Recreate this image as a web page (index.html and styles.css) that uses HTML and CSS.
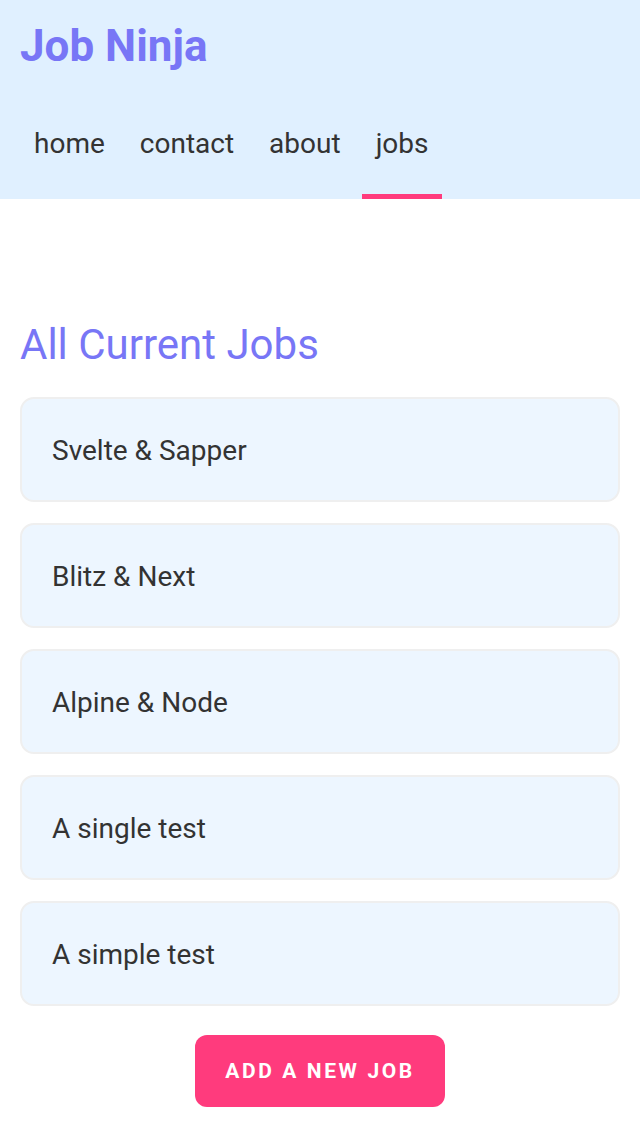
FILE: index.html
```html
<!DOCTYPE html>
<html>
<head>
<meta charset="utf-8">
<link rel="stylesheet" href="styles.css">
</head>
<body>
<header class="site-header">
  <h1 class="brand">Job Ninja</h1>
  <nav class="nav">
    <a class="nav-link">home</a>
    <a class="nav-link">contact</a>
    <a class="nav-link">about</a>
    <a class="nav-link active">jobs</a>
  </nav>
</header>
<main class="content">
  <h2 class="page-title">All Current Jobs</h2>
  <ul class="job-list">
    <li class="job">Svelte &amp; Sapper</li>
    <li class="job">Blitz &amp; Next</li>
    <li class="job">Alpine &amp; Node</li>
    <li class="job">A single test</li>
    <li class="job">A simple test</li>
  </ul>
  <div class="actions">
    <button class="btn">ADD A NEW JOB</button>
  </div>
</main>
</body>
</html>
```
FILE: styles.css
```css
* { box-sizing: border-box; }
html, body { margin: 0; padding: 0; background: #fff; }
body { font-family: Roboto, "Liberation Sans", sans-serif; color: #333; }

.site-header {
  background: #e0f0ff;
  padding: 20px 20px 0;
}
.brand {
  margin: 0;
  font-size: 44px;
  font-weight: 700;
  line-height: 52px;
  color: #7876f6;
}
.nav {
  display: flex;
  gap: 7px;
  margin-top: 24px;
}
.nav-link {
  display: block;
  font-size: 28px;
  line-height: 33px;
  padding: 31px 14px 34px;
  border-bottom: 5px solid transparent;
  color: #333;
}
.nav-link.active { border-bottom-color: #ff3b7d; }

.content { padding: 121px 20px 20px; }
.page-title {
  margin: 0 0 28px;
  font-size: 42px;
  font-weight: 400;
  line-height: 49px;
  color: #7876f6;
}
.job-list { list-style: none; margin: 0; padding: 0; display: flex; flex-direction: column; gap: 21px; }
.job {
  background: #edf6ff;
  border: 2px solid #efefef;
  border-radius: 14px;
  padding: 32px 30px 30px;
  font-size: 28px;
  line-height: 39px;
  color: #333;
}
.actions { display: flex; justify-content: center; margin-top: 29px; }
.btn {
  font-family: Roboto, "Liberation Sans", sans-serif;
  background: #ff3b7d;
  color: #fff;
  border: 0;
  border-radius: 12px;
  width: 250px;
  height: 72px;
  font-size: 21px;
  font-weight: 700;
  letter-spacing: 2.6px;
  padding: 0;
}
```
